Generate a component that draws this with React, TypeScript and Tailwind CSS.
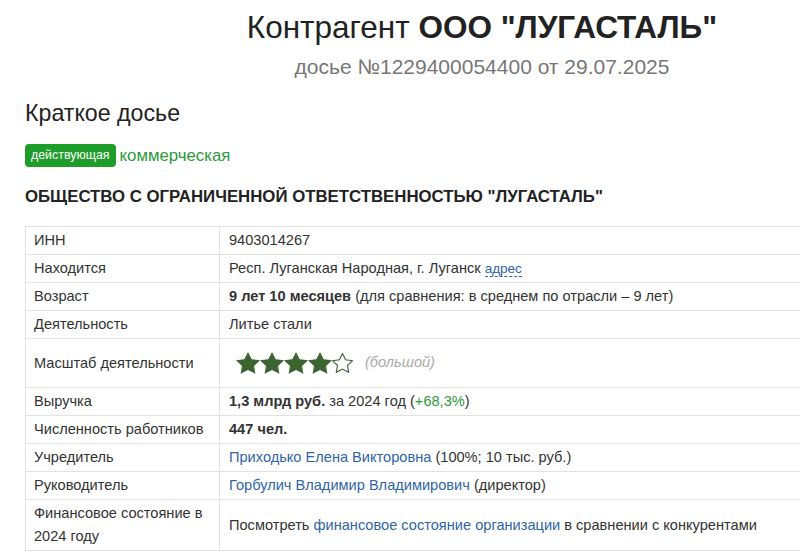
import React from "react";

const STAR = "12,2 15.09,8.26 22,9.27 17,14.14 18.18,21.02 12,17.77 5.82,21.02 7,14.14 2,9.27 8.91,8.26";

function Star({ filled }: { filled: boolean }) {
  if (filled) {
    return (
      <svg width="24" height="22" viewBox="2 2 20 19.2" preserveAspectRatio="none">
        <polygon points={STAR} fill="#3c6431" />
      </svg>
    );
  }
  return (
    <svg width="21" height="20" viewBox="1.5 1.5 21 20.2" preserveAspectRatio="none">
      <polygon points={STAR} fill="none" stroke="#3c6431" strokeWidth="1.1" strokeLinejoin="miter" />
    </svg>
  );
}

const cellL = "border border-[#e2e2e2] pl-[8px] pr-2 py-[2px] leading-[23px] align-middle w-[194px]";
const cellR = "border border-[#e2e2e2] pl-[9px] pr-2 py-[2px] leading-[23px] align-middle";
const link = "text-[#2f65a6]";

export default function App() {
  return (
    <div
      className="w-[800px] h-[560px] overflow-hidden bg-white text-[#333]"
      style={{ fontFamily: '"Liberation Sans", Arial, sans-serif' }}
    >
      <div className="w-[964px]">
        <div className="pt-[10px] text-center text-[31.5px] leading-[34px] text-[#222]">
          Контрагент <b>ООО "ЛУГАСТАЛЬ"</b>
        </div>
        <div className="mt-[11px] text-center text-[21px] leading-[24px] text-[#777]">
          досье №1229400054400 от 29.07.2025
        </div>

        <div className="pl-[25px]">
          <h2 className="mt-[21px] text-[23.2px] leading-[26px] text-[#222]">Краткое досье</h2>

          <div className="mt-[17px] flex items-center gap-[4px]">
            <span className="rounded-[4px] bg-[#1f9d2b] px-[6px] text-[12.4px] leading-[23px] text-white">
              действующая
            </span>
            <span className="text-[16.8px] text-[#2c9a3a]">коммерческая</span>
          </div>

          <h3 className="mt-[19px] text-[16.8px] font-bold leading-[20px] text-[#222]">
            ОБЩЕСТВО С ОГРАНИЧЕННОЙ ОТВЕТСТВЕННОСТЬЮ "ЛУГАСТАЛЬ"
          </h3>

          <table className="mt-[19px] w-[900px] border-collapse text-[14.6px]">
            <tbody>
              <tr>
                <td className={cellL}>ИНН</td>
                <td className={cellR}>9403014267</td>
              </tr>
              <tr>
                <td className={cellL}>Находится</td>
                <td className={cellR}>
                  Респ. Луганская Народная, г. Луганск{" "}
                  <span className="border-b border-dashed border-[#2f65a6] text-[13.5px] leading-[15px] text-[#2f65a6]">адрес</span>
                </td>
              </tr>
              <tr>
                <td className={cellL}>Возраст</td>
                <td className={cellR}>
                  <b>9 лет 10 месяцев</b> (для сравнения: в среднем по отрасли – 9 лет)
                </td>
              </tr>
              <tr>
                <td className={cellL}>Деятельность</td>
                <td className={cellR}>Литье стали</td>
              </tr>
              <tr>
                <td className={cellL}>Масштаб деятельности</td>
                <td className="border border-[#e2e2e2] pl-[9px] py-[12px] align-middle">
                  <div className="flex h-[24px] items-center pl-[7px]">
                    <Star filled />
                    <Star filled />
                    <Star filled />
                    <Star filled />
                    <Star filled={false} />
                    <span className="ml-[12px] italic text-[#aaa]">(большой)</span>
                  </div>
                </td>
              </tr>
              <tr>
                <td className={cellL}>Выручка</td>
                <td className={cellR}>
                  <b>1,3 млрд руб.</b> за 2024 год (<span className="text-[#2c9a3a]">+68,3%</span>)
                </td>
              </tr>
              <tr>
                <td className={cellL}>Численность работников</td>
                <td className={cellR}>
                  <b>447 чел.</b>
                </td>
              </tr>
              <tr>
                <td className={cellL}>Учредитель</td>
                <td className={cellR}>
                  <span className={link}>Приходько Елена Викторовна</span> (100%; 10 тыс. руб.)
                </td>
              </tr>
              <tr>
                <td className={cellL}>Руководитель</td>
                <td className={cellR}>
                  <span className={link}>Горбулич Владимир Владимирович</span> (директор)
                </td>
              </tr>
              <tr>
                <td className={cellL}>Финансовое состояние в 2024 году</td>
                <td className={cellR}>
                  Посмотреть <span className={link}>финансовое состояние организации</span> в сравнении с конкурентами
                </td>
              </tr>
            </tbody>
          </table>
        </div>
      </div>
    </div>
  );
}
